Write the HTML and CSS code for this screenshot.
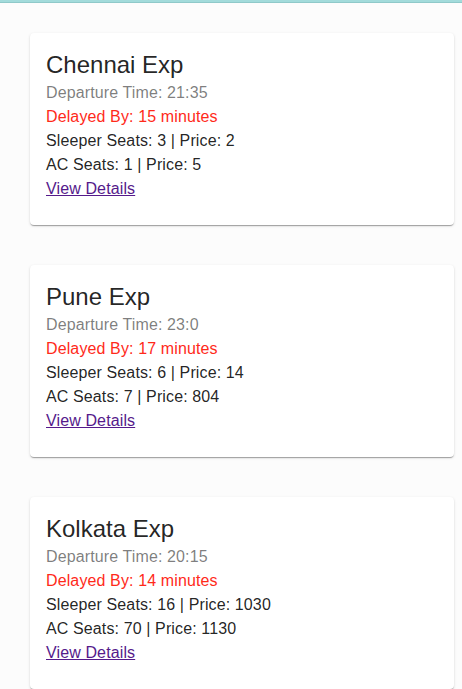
FILE: index.html
```html
<!DOCTYPE html>
<html lang="en">
<head>
<meta charset="utf-8">
<title>Trains</title>
<link rel="stylesheet" href="styles.css">
</head>
<body>
<div class="topbar"></div>
<main class="list">
  <div class="card">
    <h2 class="title">Chennai Exp</h2>
    <p class="line muted">Departure Time: 21:35</p>
    <p class="line delay">Delayed By: 15 minutes</p>
    <p class="line">Sleeper Seats: 3 | Price: 2</p>
    <p class="line">AC Seats: 1 | Price: 5</p>
    <p class="line"><a class="link" href="#">View Details</a></p>
  </div>
  <div class="card">
    <h2 class="title">Pune Exp</h2>
    <p class="line muted">Departure Time: 23:0</p>
    <p class="line delay">Delayed By: 17 minutes</p>
    <p class="line">Sleeper Seats: 6 | Price: 14</p>
    <p class="line">AC Seats: 7 | Price: 804</p>
    <p class="line"><a class="link" href="#">View Details</a></p>
  </div>
  <div class="card">
    <h2 class="title">Kolkata Exp</h2>
    <p class="line muted">Departure Time: 20:15</p>
    <p class="line delay">Delayed By: 14 minutes</p>
    <p class="line">Sleeper Seats: 16 | Price: 1030</p>
    <p class="line">AC Seats: 70 | Price: 1130</p>
    <p class="line"><a class="link" href="#">View Details</a></p>
  </div>
</main>
</body>
</html>
```
FILE: styles.css
```css
html, body {
  margin: 0;
  padding: 0;
  background: #fcfcfc;
  font-family: "Liberation Sans", Arial, sans-serif;
}
.topbar {
  height: 2px;
  background: #a3dbdb;
  border-bottom: 1px solid #8fc9c9;
}
.list {
  display: flex;
  flex-direction: column;
  gap: 40px;
  padding: 30px 0 40px 30px;
}
.card {
  width: 424px;
  box-sizing: border-box;
  background: #fff;
  border-radius: 4px;
  padding: 16px 16px 24px;
  box-shadow: 0 2px 1px -1px rgba(0,0,0,0.2), 0 1px 1px 0 rgba(0,0,0,0.14), 0 1px 3px 0 rgba(0,0,0,0.12);
}
.title {
  margin: 0;
  font-size: 24px;
  line-height: 32px;
  font-weight: 400;
  color: rgba(0,0,0,0.87);
}
.line {
  margin: 0;
  font-size: 16px;
  line-height: 24px;
  letter-spacing: 0.12px;
  color: rgba(0,0,0,0.87);
}
.muted {
  color: rgba(0,0,0,0.52);
}
.delay {
  color: #ff2a1a;
}
.link {
  color: #551a8b;
  text-decoration: underline;
}
```
